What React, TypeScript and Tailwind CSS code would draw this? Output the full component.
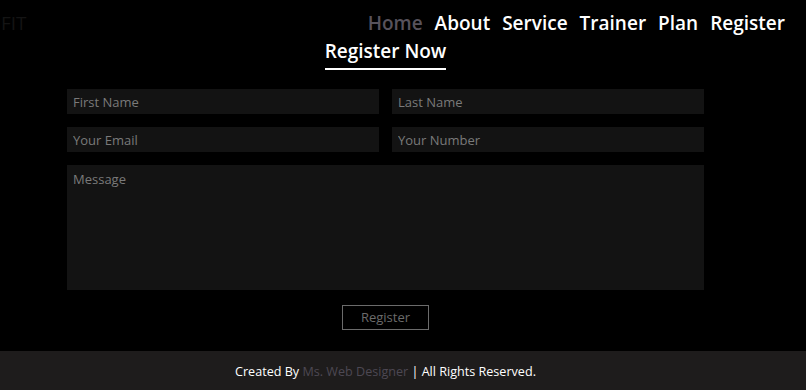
const navItems = ["Home", "About", "Service", "Trainer", "Plan", "Register"];

const fieldClass =
  "h-[25px] w-full bg-[#131313] px-[6px] text-[13px] text-[#9a9a9a] placeholder:text-[#7a7a7a] outline-none";

export default function App() {
  return (
    <div
      className="flex min-h-[390px] w-[806px] flex-col bg-black"
      style={{ fontFamily: '"Open Sans", "Liberation Sans", sans-serif' }}
    >
      <header className="flex h-[37px] items-start justify-between pr-[21px] pt-[10px]">
        <span className="ml-[1px] text-[19px] leading-[26px] text-[#141414]">FIT</span>
        <nav className="flex gap-[12px] text-[19px] font-semibold leading-[26px] text-white">
          {navItems.map((item) => (
            <a key={item} className={item === "Home" ? "text-[#57525c]" : ""}>
              {item}
            </a>
          ))}
        </nav>
      </header>

      <section className="flex w-[771px] flex-col items-center">
        <h2 className="mt-[1px] border-b-2 border-white pb-[4px] text-[19px] font-semibold leading-[26px] text-white">
          Register Now
        </h2>

        <form className="mt-[19px] flex w-[637px] flex-col gap-[13px]" onSubmit={(e) => e.preventDefault()}>
          <div className="grid grid-cols-2 gap-[13px]">
            <input type="text" placeholder="First Name" className={fieldClass} />
            <input type="text" placeholder="Last Name" className={fieldClass} />
          </div>
          <div className="grid grid-cols-2 gap-[13px]">
            <input type="email" placeholder="Your Email" className={fieldClass} />
            <input type="text" placeholder="Your Number" className={fieldClass} />
          </div>
          <textarea
            placeholder="Message"
            className="h-[125px] w-full resize-none bg-[#131313] px-[6px] py-[5px] text-[13px] text-[#9a9a9a] placeholder:text-[#7a7a7a] outline-none"
          />
          <div className="mt-[2px] flex justify-center">
            <button
              type="submit"
              className="h-[25px] w-[87px] border border-[#6b6b6b] text-[13px] leading-none text-[#6b6b6b]"
            >
              Register
            </button>
          </div>
        </form>
      </section>

      <footer className="mt-[21px] h-[39px] w-full bg-[#1e1c1c] pt-[3px]">
        <p className="flex h-full w-[771px] items-center justify-center text-[12.6px] text-white">
          Created By&nbsp;<span className="text-[#4d4853]">Ms. Web Designer</span>&nbsp;| All Rights Reserved.
        </p>
      </footer>
    </div>
  );
}
